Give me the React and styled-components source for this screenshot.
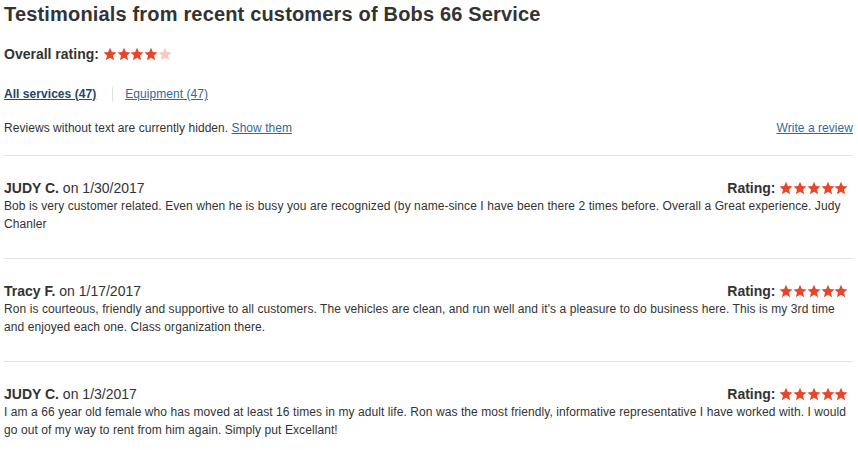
import React from 'react';
import styled, { createGlobalStyle } from 'styled-components';

const GlobalStyle = createGlobalStyle`
  body {
    margin: 0;
    background: #fff;
    font-family: "Liberation Sans", Arial, sans-serif;
    color: #333;
  }
`;

const reviews = [
  {
    id: 1,
    name: 'JUDY C.',
    date: '1/30/2017',
    rating: 5,
    text:
      'Bob is very customer related. Even when he is busy you are recognized (by name-since I have been there 2 times before. Overall a Great experience. Judy Chanler',
  },
  {
    id: 2,
    name: 'Tracy F.',
    date: '1/17/2017',
    rating: 5,
    text:
      "Ron is courteous, friendly and supportive to all customers. The vehicles are clean, and run well and it's a pleasure to do business here. This is my 3rd time and enjoyed each one. Class organization there.",
  },
  {
    id: 3,
    name: 'JUDY C.',
    date: '1/3/2017',
    rating: 5,
    text:
      'I am a 66 year old female who has moved at least 16 times in my adult life. Ron was the most friendly, informative representative I have worked with. I would go out of my way to rent from him again. Simply put Excellant!',
  },
];

const Star = ({ faded }) => (
  <StarIcon viewBox="0 0 24 24" faded={faded ? 1 : 0}>
    <path d="M12 1.2l3.2 7.4 8 .7-6.1 5.3 1.9 7.9L12 18.3l-7 4.2 1.9-7.9-6.1-5.3 8-.7z" />
  </StarIcon>
);

const Stars = ({ value }) => (
  <StarRow>
    {[1, 2, 3, 4, 5].map(i => (
      <Star key={i} faded={i > value} />
    ))}
  </StarRow>
);

const App = () => {
  return (
    <Page>
      <GlobalStyle />
      <Title>Testimonials from recent customers of Bobs 66 Service</Title>
      <Overall>
        Overall rating: <Stars value={4} />
      </Overall>
      <Tabs>
        <Tab active>All services (47)</Tab>
        <TabDivider />
        <Tab>Equipment (47)</Tab>
      </Tabs>
      <NoticeRow>
        <span>
          Reviews without text are currently hidden. <TextLink href="#">Show them</TextLink>
        </span>
        <TextLink href="#">Write a review</TextLink>
      </NoticeRow>
      {reviews.map(r => (
        <Review key={r.id}>
          <ReviewHead>
            <Author>
              <strong>{r.name}</strong> on {r.date}
            </Author>
            <Rating>
              Rating: <Stars value={r.rating} />
            </Rating>
          </ReviewHead>
          <Body>{r.text}</Body>
        </Review>
      ))}
    </Page>
  );
};

const Page = styled.div`
  padding: 0 5px 0 4px;
`;

const Title = styled.h1`
  margin: 2px 0 0;
  font-size: 20px;
  line-height: 24px;
  font-weight: bold;
  letter-spacing: 0.17px;
  color: #333;
`;

const Overall = styled.div`
  display: flex;
  align-items: center;
  margin-top: 19px;
  font-size: 14px;
  line-height: 18px;
  font-weight: bold;
  gap: 4px;
`;

const StarRow = styled.span`
  display: inline-flex;
  align-items: center;
`;

const StarIcon = styled.svg`
  width: 14px;
  height: 14px;
  margin-right: -0.3px;
  fill: ${props => (props.faded ? '#f6cbbb' : '#e8452a')};
`;

const Tabs = styled.div`
  display: flex;
  align-items: center;
  margin-top: 23px;
  font-size: 12px;
  line-height: 16px;
`;

const Tab = styled.a`
  color: ${props => (props.active ? '#24466a' : '#336a99')};
  font-weight: ${props => (props.active ? 'bold' : 'normal')};
  text-decoration: underline;
  letter-spacing: 0.05px;
  cursor: pointer;
`;

const TabDivider = styled.span`
  width: 1px;
  height: 15px;
  margin: 0 12px 0 16px;
  background: #e2e2e2;
`;

const NoticeRow = styled.div`
  display: flex;
  justify-content: space-between;
  margin-top: 18px;
  padding-bottom: 19px;
  font-size: 12px;
  line-height: 16px;
  letter-spacing: 0.05px;
  color: #333;
`;

const TextLink = styled.a`
  color: #336a99;
  text-decoration: underline;
`;

const Review = styled.div`
  border-top: 1px solid #e3e3e3;
  padding: 23px 0 25px;
`;

const ReviewHead = styled.div`
  display: flex;
  justify-content: space-between;
  align-items: center;
  font-size: 14px;
  line-height: 18px;
`;

const Author = styled.div`
  color: #333;
`;

const Rating = styled.div`
  display: flex;
  align-items: center;
  gap: 4px;
  font-weight: bold;
  padding-right: 5px;
`;

const Body = styled.p`
  margin: 0;
  font-size: 12px;
  line-height: 18px;
  letter-spacing: 0.08px;
  color: #333;
`;

export default App;
